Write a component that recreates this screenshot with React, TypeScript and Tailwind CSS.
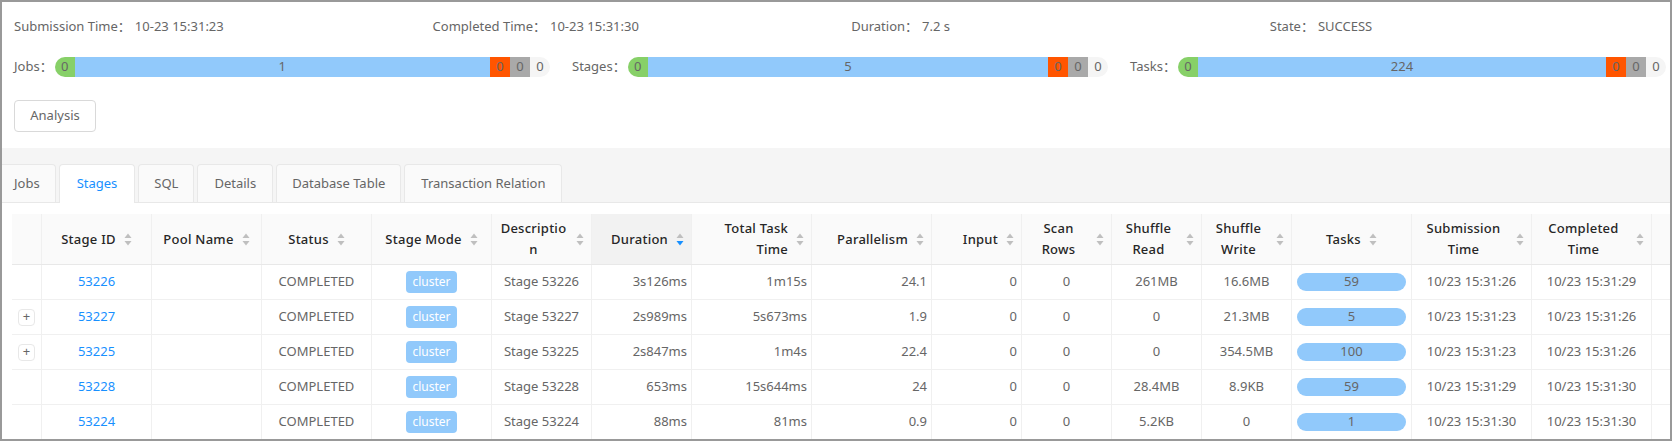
const font = { fontFamily: '"Noto Sans", "Noto Sans CJK SC", sans-serif' };

interface Segment {
  value: string;
  width: string;
  bg: string;
}

interface Stage {
  id: string;
  expandable: boolean;
  duration: string;
  totalTime: string;
  parallelism: string;
  scanRows: string;
  shuffleRead: string;
  shuffleWrite: string;
  tasks: string;
  submitted: string;
  completed: string;
}

const stages: Stage[] = [
  { id: '53226', expandable: false, duration: '3s126ms', totalTime: '1m15s', parallelism: '24.1', scanRows: '0', shuffleRead: '261MB', shuffleWrite: '16.6MB', tasks: '59', submitted: '10/23 15:31:26', completed: '10/23 15:31:29' },
  { id: '53227', expandable: true, duration: '2s989ms', totalTime: '5s673ms', parallelism: '1.9', scanRows: '0', shuffleRead: '0', shuffleWrite: '21.3MB', tasks: '5', submitted: '10/23 15:31:23', completed: '10/23 15:31:26' },
  { id: '53225', expandable: true, duration: '2s847ms', totalTime: '1m4s', parallelism: '22.4', scanRows: '0', shuffleRead: '0', shuffleWrite: '354.5MB', tasks: '100', submitted: '10/23 15:31:23', completed: '10/23 15:31:26' },
  { id: '53228', expandable: false, duration: '653ms', totalTime: '15s644ms', parallelism: '24', scanRows: '0', shuffleRead: '28.4MB', shuffleWrite: '8.9KB', tasks: '59', submitted: '10/23 15:31:29', completed: '10/23 15:31:30' },
  { id: '53224', expandable: false, duration: '88ms', totalTime: '81ms', parallelism: '0.9', scanRows: '0', shuffleRead: '5.2KB', shuffleWrite: '0', tasks: '1', submitted: '10/23 15:31:30', completed: '10/23 15:31:30' },
];

const headers = [
  { label: 'Stage ID', width: 'w-[110px]', align: 'justify-center text-center' },
  { label: 'Pool Name', width: 'w-[110px]', align: 'justify-center text-center' },
  { label: 'Status', width: 'w-[110px]', align: 'justify-center text-center' },
  { label: 'Stage Mode', width: 'w-[120px]', align: 'justify-center text-center' },
  { label: 'Description', width: 'w-[100px]', align: 'justify-center text-center' },
  { label: 'Duration', width: 'w-[100px]', align: 'justify-end text-right' },
  { label: 'Total Task Time', width: 'w-[120px]', align: 'justify-end text-right' },
  { label: 'Parallelism', width: 'w-[120px]', align: 'justify-end text-right' },
  { label: 'Input', width: 'w-[90px]', align: 'justify-end text-right' },
  { label: 'Scan Rows', width: 'w-[90px]', align: 'justify-center text-center' },
  { label: 'Shuffle Read', width: 'w-[90px]', align: 'justify-center text-center' },
  { label: 'Shuffle Write', width: 'w-[90px]', align: 'justify-center text-center' },
  { label: 'Tasks', width: 'w-[120px]', align: 'justify-center text-center' },
  { label: 'Submission Time', width: 'w-[120px]', align: 'justify-center text-center' },
  { label: 'Completed Time', width: 'w-[120px]', align: 'justify-center text-center' },
];

const tabs = [
  { label: 'Jobs', className: 'h-[38px] rounded-tr border-l-0 bg-[#fafafa] pr-[15px] pl-3' },
  { label: 'Stages', className: 'relative -mb-px h-[39px] rounded-t bg-white px-[17px] text-[#1890ff]' },
  { label: 'SQL', className: 'h-[38px] rounded-t bg-[#fafafa] px-[15px]' },
  { label: 'Details', className: 'h-[38px] rounded-t bg-[#fafafa] px-4' },
  { label: 'Database Table', className: 'h-[38px] rounded-t bg-[#fafafa] px-[15px]' },
  { label: 'Transaction Relation', className: 'h-[38px] rounded-t bg-[#fafafa] px-4' },
];

function SortIcon({ active }: { active?: boolean }) {
  return (
    <svg width="8" height="13" viewBox="0 0 8 13" className="ml-2 shrink-0">
      <path d="M4 0.5 L7.5 5 L0.5 5 Z" fill="#bfbfbf" />
      <path d="M0.5 8 L7.5 8 L4 12.5 Z" fill={active ? '#1890ff' : '#bfbfbf'} />
    </svg>
  );
}

function ProgressBar({ label, segments }: { label: string; segments: Segment[] }) {
  return (
    <div className="flex w-0 flex-1 items-center">
      <span className="mr-[2px] whitespace-nowrap">{label}：</span>
      <div className="flex h-5 flex-1 overflow-hidden rounded-full text-[#666]">
        {segments.map((s, i) => (
          <div key={i} className={`${s.width} ${s.bg} flex items-center justify-center`}>
            {s.value}
          </div>
        ))}
      </div>
    </div>
  );
}

function bar(total: string): Segment[] {
  return [
    { value: '0', width: 'w-5', bg: 'bg-[#87d068]' },
    { value: total, width: 'flex-1', bg: 'bg-[#91c9fb]' },
    { value: '0', width: 'w-5', bg: 'bg-[#ff5500]' },
    { value: '0', width: 'w-5', bg: 'bg-[#a9a9a9]' },
    { value: '0', width: 'w-5', bg: 'bg-[#f5f5f5]' },
  ];
}

export default function App() {
  return (
    <div style={font} className="h-[441px] w-[1672px] overflow-hidden border-2 border-[#999] bg-white text-[13px] text-[#666]">
      <div className="h-[146px] px-3">
        <div className="grid h-[50px] grid-cols-[repeat(4,418.6px)] items-center">
          <div>Submission Time：<span className="ml-[4px]">10-23 15:31:23</span></div>
          <div>Completed Time：<span className="ml-[4px]">10-23 15:31:30</span></div>
          <div>Duration：<span className="ml-[4px]">7.2 s</span></div>
          <div>State：<span className="ml-[4px]">SUCCESS</span></div>
        </div>
        <div className="mt-[5px] flex w-[1652px] gap-[22px]">
          <ProgressBar label="Jobs" segments={bar('1')} />
          <ProgressBar label="Stages" segments={bar('5')} />
          <ProgressBar label="Tasks" segments={bar('224')} />
        </div>
        <button className="mt-[23px] block h-8 w-[82px] rounded border border-[#d9d9d9] bg-white text-[13px] text-[#666]">Analysis</button>
      </div>

      <div className="flex h-[55px] items-end gap-[3px] border-b border-[#e8e8e8] bg-[#f5f5f5]">
        {tabs.map((t) => (
          <div key={t.label} className={`${t.className} flex items-center border border-b-0 border-[#e8e8e8]`}>
            {t.label}
          </div>
        ))}
      </div>

      <div className="mt-[11px] ml-[10px] w-[1658px]">
        <div className="flex h-[51px] border-b border-[#e8e8e8] bg-[#fafafa] font-medium tracking-[0.25px] text-[#262626]">
          <div className="w-[30px] border-r border-[#f0f0f0]" />
          {headers.map((h) => (
            <div
              key={h.label}
              className={`${h.width} ${h.label === 'Duration' ? 'bg-[#f2f2f2]' : ''} ${h.align} flex items-center border-r border-[#f0f0f0] px-[7px]`}
            >
              <span className="min-w-0 leading-[21px] wrap-break-word">{h.label}</span>
              <SortIcon active={h.label === 'Duration'} />
            </div>
          ))}
        </div>
        {stages.map((s) => (
          <div key={s.id} className="flex h-[35px] items-center border-b border-[#f0f0f0]">
            <div className="flex h-full w-[30px] items-center justify-center border-r border-[#f0f0f0]">
              {s.expandable && (
                <span className="flex h-[17px] w-[17px] items-center justify-center rounded-sm border border-[#e8e8e8] text-[#666]">+</span>
              )}
            </div>
            <div className="flex h-full w-[110px] items-center justify-center border-r border-[#f0f0f0] text-[#1890ff]">{s.id}</div>
            <div className="h-full w-[110px] border-r border-[#f0f0f0]" />
            <div className="flex h-full w-[110px] items-center justify-center border-r border-[#f0f0f0]">COMPLETED</div>
            <div className="flex h-full w-[120px] items-center justify-center border-r border-[#f0f0f0]">
              <span className="flex h-[22px] w-[51px] items-center justify-center rounded bg-[#91c9fb] text-xs text-white">cluster</span>
            </div>
            <div className="flex h-full w-[100px] items-center justify-center border-r border-[#f0f0f0]">Stage {s.id}</div>
            <div className="flex h-full w-[100px] items-center justify-end border-r border-[#f0f0f0] px-1">{s.duration}</div>
            <div className="flex h-full w-[120px] items-center justify-end border-r border-[#f0f0f0] px-1">{s.totalTime}</div>
            <div className="flex h-full w-[120px] items-center justify-end border-r border-[#f0f0f0] px-1">{s.parallelism}</div>
            <div className="flex h-full w-[90px] items-center justify-end border-r border-[#f0f0f0] px-1">0</div>
            <div className="flex h-full w-[90px] items-center justify-center border-r border-[#f0f0f0]">{s.scanRows}</div>
            <div className="flex h-full w-[90px] items-center justify-center border-r border-[#f0f0f0]">{s.shuffleRead}</div>
            <div className="flex h-full w-[90px] items-center justify-center border-r border-[#f0f0f0]">{s.shuffleWrite}</div>
            <div className="flex h-full w-[120px] items-center justify-center border-r border-[#f0f0f0] px-[5px]">
              <div className="flex h-[18px] w-full items-center justify-center rounded-full bg-[#91c9fb]">{s.tasks}</div>
            </div>
            <div className="flex h-full w-[120px] items-center justify-center border-r border-[#f0f0f0]">{s.submitted}</div>
            <div className="flex h-full w-[120px] items-center justify-center border-r border-[#f0f0f0]">{s.completed}</div>
          </div>
        ))}
      </div>
    </div>
  );
}
